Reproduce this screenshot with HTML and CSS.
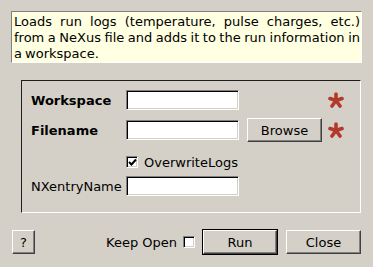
FILE: index.html
```html
<!DOCTYPE html>
<html>
<head>
<meta charset="utf-8">
<link rel="stylesheet" href="styles.css">
</head>
<body>
<div class="dialog">
  <div class="desc">Loads run logs (temperature, pulse charges, etc.) from a NeXus file and adds it to the run information in a workspace.</div>
  <div class="group">
    <div class="row r1">
      <span class="label bold">Workspace</span>
      <span class="input"></span>
      <span class="spacer-btn"></span>
      <svg class="star" viewBox="0 0 16 16" width="16" height="16"><g stroke="#b3392a" stroke-width="3.6" stroke-linecap="round"><line x1="8" y1="8.5" x2="8" y2="2"/><line x1="8" y1="8.5" x2="14" y2="6.5"/><line x1="8" y1="8.5" x2="2" y2="6.5"/><line x1="8" y1="8.5" x2="12" y2="14"/><line x1="8" y1="8.5" x2="4" y2="14"/></g></svg>
    </div>
    <div class="row r2">
      <span class="label bold">Filename</span>
      <span class="input"></span>
      <span class="btn browse">Browse</span>
      <svg class="star" viewBox="0 0 16 16" width="16" height="16"><g stroke="#b3392a" stroke-width="3.6" stroke-linecap="round"><line x1="8" y1="8.5" x2="8" y2="2"/><line x1="8" y1="8.5" x2="14" y2="6.5"/><line x1="8" y1="8.5" x2="2" y2="6.5"/><line x1="8" y1="8.5" x2="12" y2="14"/><line x1="8" y1="8.5" x2="4" y2="14"/></g></svg>
    </div>
    <div class="row r3">
      <span class="label"></span>
      <span class="check checked"><svg viewBox="0 0 9 9" width="9" height="9"><path d="M1 4 L3.5 6.5 L8 1.5" fill="none" stroke="#000" stroke-width="2"/></svg></span>
      <span class="checktext">OverwriteLogs</span>
    </div>
    <div class="row r4">
      <span class="label">NXentryName</span>
      <span class="input"></span>
    </div>
  </div>
  <div class="bottom">
    <span class="btn help">?</span>
    <span class="grow"></span>
    <span class="keep">Keep Open</span>
    <span class="check"></span>
    <span class="default"><span class="btn run">Run</span></span>
    <span class="btn close">Close</span>
  </div>
</div>
</body>
</html>
```
FILE: styles.css
```css
html, body {
  margin: 0;
  padding: 0;
  background: #d4d0c8;
}
body {
  width: 373px;
  height: 267px;
  overflow: hidden;
  font-family: "DejaVu Sans", sans-serif;
  font-size: 13px;
  color: #000;
}
.dialog {
  display: flex;
  flex-direction: column;
  padding-top: 11px;
}
.desc {
  margin-left: 11px;
  width: 346px;
  height: 48px;
  padding: 2px 1px 0 2px;
  background: #ffffe1;
  border-top: 1px solid #808080;
  border-left: 1px solid #808080;
  border-right: 1px solid #ffffff;
  border-bottom: 1px solid #ffffff;
  line-height: 16px;
  word-spacing: -1px;
  text-align: justify;
  text-align-last: left;
}
.group {
  margin-top: 17px;
  margin-left: 21px;
  width: 329px;
  padding: 9px 0 16px 9px;
  border-top: 1px solid #1e1e1e;
  border-left: 1px solid #1e1e1e;
  border-right: 1px solid #ffffff;
  border-bottom: 1px solid #ffffff;
  display: flex;
  flex-direction: column;
}
.row {
  display: flex;
  align-items: center;
}
.r1 { height: 20px; }
.r2 { height: 24px; margin-top: 8px; }
.r3 { height: 24px; margin-top: 8px; }
.r4 { height: 20px; margin-top: 2px; }
.label {
  width: 95px;
  flex: none;
}
.bold { font-weight: bold; }
.input {
  box-sizing: border-box;
  width: 113px;
  height: 20px;
  flex: none;
  background: #fff;
  border-top: 1px solid #808080;
  border-left: 1px solid #808080;
  border-right: 1px solid #ffffff;
  border-bottom: 1px solid #ffffff;
  box-shadow: inset 1px 1px 0 #000, inset -1px -1px 0 #d4d0c8;
}
.spacer-btn {
  width: 75px;
  margin-left: 8px;
  flex: none;
}
.star {
  margin-left: 6px;
  flex: none;
}
.btn {
  box-sizing: border-box;
  display: flex;
  align-items: center;
  justify-content: center;
  height: 24px;
  background: #d4d0c8;
  border-top: 1px solid #ffffff;
  border-left: 1px solid #ffffff;
  border-right: 1px solid #404040;
  border-bottom: 1px solid #404040;
  box-shadow: inset -1px -1px 0 #808080;
  flex: none;
}
.browse {
  width: 75px;
  margin-left: 8px;
}
.check {
  box-sizing: border-box;
  width: 12px;
  height: 12px;
  flex: none;
  background: #fff;
  border-top: 1px solid #808080;
  border-left: 1px solid #808080;
  border-right: 1px solid #ffffff;
  border-bottom: 1px solid #ffffff;
  box-shadow: inset 1px 1px 0 #000, inset -1px -1px 0 #d4d0c8;
  display: flex;
  align-items: center;
  justify-content: center;
}
.check svg { display: block; margin: 1px 0 0 1px; }
.checktext { margin-left: 6px; }
.bottom {
  display: flex;
  align-items: center;
  height: 26px;
  margin-top: 16px;
  padding: 0 12px 0 12px;
}
.help { width: 23px; }
.grow { flex: 1; }
.keep { margin-right: 6px; }
.default {
  margin-left: 7px;
  border: 1px solid #000;
  display: flex;
}
.run { width: 74px; }
.close { width: 75px; margin-left: 8px; }
```
